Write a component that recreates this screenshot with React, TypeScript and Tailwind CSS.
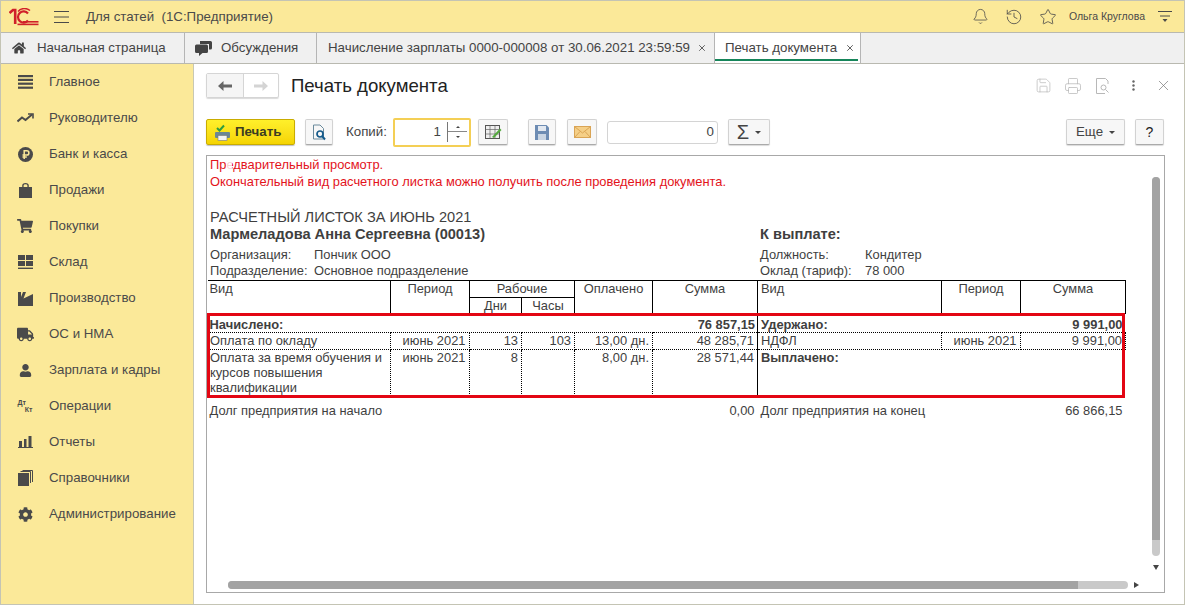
import { Bell, History, Star, X, Printer, Save } from "lucide-react";
import { FaCog, FaUser, FaTruck, FaShoppingCart, FaHome } from "react-icons/fa";

function Logo1C() {
  return (
    <svg width="30" height="18" viewBox="0 0 30 18" fill="none" stroke="#d0202a">
      <path d="M0.5 5 L4 2 H6.2 V16" strokeWidth="2.6" />
      <path d="M19 5.5 A5.6 5.6 0 1 0 19 12.5" strokeWidth="2.2" />
      <path d="M21 2.6 A8.4 8.4 0 0 0 9 3.5" strokeWidth="1.4" />
      <path d="M14 13.8 H29.5" strokeWidth="1.6" />
      <path d="M8.5 16.4 H29.5" strokeWidth="1.6" />
    </svg>
  );
}

function MenuLines() {
  return (
    <svg width="15" height="12" viewBox="0 0 15 12" stroke="#4a4a4a" strokeWidth="1">
      <path d="M0 .5H15M0 6H15M0 11.5H15" />
    </svg>
  );
}

function RubleIcon() {
  return (
    <svg width="15" height="15" viewBox="0 0 15 15">
      <circle cx="7.5" cy="7.5" r="7.5" fill="#4a4a4a" />
      <path d="M6.2 12V3.8H8.8A2.1 2.1 0 0 1 8.8 8H4.5M4.5 10H8.8" fill="none" stroke="#fbe999" strokeWidth="1.5" />
    </svg>
  );
}

function BagIcon() {
  return (
    <svg width="13" height="15" viewBox="0 0 13 15" fill="#4a4a4a">
      <path d="M0 4H3.2V2.5A3.3 2.5 0 0 1 9.8 2.5V4H13V15H0ZM4.6 4H8.4V2.6A1.9 1.4 0 0 0 4.6 2.6Z" fillRule="evenodd" />
    </svg>
  );
}

function BarsIcon() {
  return (
    <svg width="15" height="14" viewBox="0 0 15 14" fill="#4a4a4a">
      <rect x="0" y="0" width="15" height="2.2" />
      <rect x="0" y="3.8" width="15" height="2.2" />
      <rect x="0" y="7.6" width="15" height="2.2" />
      <rect x="0" y="11.6" width="15" height="2.2" />
    </svg>
  );
}

function TrendIcon() {
  return (
    <svg width="17" height="10" viewBox="0 0 17 10" fill="none" stroke="#4a4a4a" strokeWidth="2">
      <path d="M.5 8.5 5 4.5 8.5 7 15 1.5" />
      <path d="M11 1H16V5.5" strokeWidth="1.6" />
    </svg>
  );
}

function StoreIcon() {
  return (
    <svg width="15" height="14" viewBox="0 0 15 14" fill="#4a4a4a">
      <rect x="0" y="0" width="7" height="5" />
      <rect x="8" y="0" width="7" height="5" />
      <rect x="0" y="6" width="7" height="5" />
      <rect x="8" y="6" width="7" height="5" />
      <rect x="0" y="12.6" width="15" height="1.4" />
    </svg>
  );
}

function FactoryIcon() {
  return (
    <svg width="15" height="15" viewBox="0 0 15 15" fill="#4a4a4a">
      <path d="M0 15V1H3V6L5 1H8L5.5 7.5 15 3V15Z" />
    </svg>
  );
}

function ChartIcon() {
  return (
    <svg width="15" height="12" viewBox="0 0 15 12" fill="#4a4a4a">
      <rect x="1" y="5" width="3" height="6" />
      <rect x="6" y="3" width="2.5" height="8" />
      <rect x="10.5" y="0" width="3" height="11" />
      <rect x="0" y="11" width="15" height="1" />
    </svg>
  );
}

function BooksIcon() {
  return (
    <svg width="15" height="16" viewBox="0 0 15 16" fill="none" stroke="#4a4a4a">
      <rect x="0" y="3" width="11" height="13" fill="#4a4a4a" stroke="none" />
      <path d="M2.5 1.5H12.5V13M4.5 .5H14.5V12" />
    </svg>
  );
}

function DebitCredit() {
  return (
    <span className="flex h-[15px] w-[15px] flex-col text-[7px] leading-[7px] font-bold text-[#4a4a4a]">
      <span>Дт</span>
      <span className="self-end">Кт</span>
    </span>
  );
}

function CommentsIcon() {
  return (
    <svg width="17" height="15" viewBox="0 0 17 15" fill="#444">
      <path d="M5 0H15.5A1.5 1.5 0 0 1 17 1.5V7A1.5 1.5 0 0 1 15.5 8.5H14V3H5Z" />
      <path d="M1.5 3.5H11.5A1.5 1.5 0 0 1 13 5V10.5A1.5 1.5 0 0 1 11.5 12H7.5L4 15V12H1.5A1.5 1.5 0 0 1 0 10.5V5A1.5 1.5 0 0 1 1.5 3.5Z" />
    </svg>
  );
}

function PreviewGhost() {
  return (
    <svg width="15" height="16" viewBox="0 0 15 16" fill="none" stroke="#b8b8b8">
      <path d="M9 15.5H.5V.5H9.5L12 3V6" />
      <circle cx="7.5" cy="9.5" r="2.5" />
      <path d="M9.5 11.5 12.5 14.5" />
    </svg>
  );
}

const menu = [
  { label: "Главное", icon: <BarsIcon /> },
  { label: "Руководителю", icon: <TrendIcon /> },
  { label: "Банк и касса", icon: <RubleIcon /> },
  { label: "Продажи", icon: <BagIcon /> },
  { label: "Покупки", icon: <FaShoppingCart size={16} color="#4a4a4a" /> },
  { label: "Склад", icon: <StoreIcon /> },
  { label: "Производство", icon: <FactoryIcon /> },
  { label: "ОС и НМА", icon: <FaTruck size={17} color="#4a4a4a" /> },
  { label: "Зарплата и кадры", icon: <FaUser size={13} color="#4a4a4a" /> },
  { label: "Операции", icon: <DebitCredit /> },
  { label: "Отчеты", icon: <ChartIcon /> },
  { label: "Справочники", icon: <BooksIcon /> },
  { label: "Администрирование", icon: <FaCog size={15} color="#4a4a4a" /> },
];

function Sidebar() {
  return (
    <aside className="w-[193px] shrink-0 border-r border-[#c8c8b4] bg-[#fbe999]">
      {menu.map((item) => (
        <div key={item.label} className="flex h-9 items-center text-[13.3px] whitespace-nowrap text-[#4a4a4a]">
          <span className="flex w-[48px] shrink-0 justify-center">{item.icon}</span>
          <span>{item.label}</span>
        </div>
      ))}
    </aside>
  );
}

function Tabs() {
  return (
    <div className="flex h-[32px] shrink-0 border-y border-[#b9b9b0] bg-[#f0f0f0] text-[13.3px] text-[#444]">
      <div className="flex w-[184px] items-center border-r border-[#b5b5b5] pl-[11px]">
        <FaHome size={14} color="#444" />
        <span className="ml-[11px]">Начальная страница</span>
      </div>
      <div className="flex w-[132px] items-center border-r border-[#b5b5b5] pl-[10px]">
        <CommentsIcon />
        <span className="ml-[9px]">Обсуждения</span>
      </div>
      <div className="flex w-[398px] items-center border-r border-[#b5b5b5] pl-[11px]">
        <span className="whitespace-nowrap">Начисление зарплаты 0000-000008 от 30.06.2021 23:59:59</span>
        <X size={10} className="ml-[7px] shrink-0" />
      </div>
      <div className="relative flex w-[146px] items-center border-r border-[#b5b5b5] bg-white pl-[10px]">
        <span>Печать документа</span>
        <X size={10} className="ml-[8px]" />
        <span className="absolute right-[2px] bottom-[2px] left-0 h-[2px] bg-[#16855a]" />
      </div>
    </div>
  );
}

function Btn({ className = "", children }: { className?: string; children: React.ReactNode }) {
  return (
    <div
      className={`flex items-center justify-center rounded-[2px] border border-[#d2d2d2] border-b-[#aaa] bg-[#f7f7f7] shadow-[0_1px_1px_rgba(0,0,0,0.15)] ${className}`}
    >
      {children}
    </div>
  );
}

function Caret() {
  return <span className="ml-[6px] h-0 w-0 border-x-[3px] border-t-[3px] border-x-transparent border-t-[#444]" />;
}

function Header() {
  return (
    <div className="flex h-[43px] items-center">
      <div className="flex h-[25px] w-[73px] rounded-[2px] border border-[#d5d5d5] shadow-[0_1px_1px_rgba(0,0,0,0.15)]">
        <div className="flex w-[37px] items-center justify-center border-r border-[#d5d5d5] bg-[#f5f5f5]">
          <svg width="14" height="10" viewBox="0 0 14 10" fill="#666"><path d="M0 5 5.5 0V3.5H14V6.5H5.5V10Z" /></svg>
        </div>
        <div className="flex flex-1 items-center justify-center">
          <svg width="14" height="10" viewBox="0 0 14 10" fill="#d4d4d4"><path d="M14 5 8.5 0V3.5H0V6.5H8.5V10Z" /></svg>
        </div>
      </div>
      <h1 className="ml-[12px] text-[18.6px] text-[#222]">Печать документа</h1>
      <div className="-mr-[13px] ml-auto flex items-center text-[#b8b8b8]">
        <span className="flex w-[30px] justify-center"><Save size={17} strokeWidth={1} /></span>
        <span className="flex w-[30px] justify-center"><Printer size={18} strokeWidth={1} /></span>
        <span className="flex w-[30px] justify-center"><PreviewGhost /></span>
        <span className="flex w-[30px] justify-center">
          <svg width="3" height="11" viewBox="0 0 3 11" fill="#666"><circle cx="1.5" cy="1.5" r="1.2" /><circle cx="1.5" cy="5.5" r="1.2" /><circle cx="1.5" cy="9.5" r="1.2" /></svg>
        </span>
        <span className="flex w-[30px] justify-center"><X size={17} strokeWidth={1} color="#777" /></span>
      </div>
    </div>
  );
}

function Toolbar() {
  return (
    <div className="mt-[10px] flex h-[30px] items-center text-[13.3px] text-[#444]">
      <div className="flex h-[26px] w-[89px] items-center rounded-[2px] border border-[#c9ac00] bg-gradient-to-b from-[#fff02a] to-[#f5d400] pl-[7px] shadow-[0_1px_1px_rgba(0,0,0,0.25)]">
        <svg width="17" height="17" viewBox="0 0 17 17">
          <path d="M3 4 5.5 6.5 10 1.5" fill="none" stroke="#2e9d3e" strokeWidth="2" />
          <rect x="1" y="8" width="15" height="6" rx="1" fill="#6d8793" />
          <rect x="4" y="11.5" width="9" height="5" fill="#f4f4f4" stroke="#777" strokeWidth=".6" />
        </svg>
        <span className="ml-[4px] font-bold text-[#3c3c22]">Печать</span>
      </div>
      <Btn className="ml-[10px] h-[26px] w-[28px]">
        <svg width="15" height="17" viewBox="0 0 15 17" fill="none">
          <path d="M1.5 1H8L11.5 4.5V15H1.5Z" stroke="#6a8a9c" />
          <circle cx="8" cy="10" r="3" stroke="#155a8a" strokeWidth="1.7" />
          <path d="M10 12 13 15.5" stroke="#155a8a" strokeWidth="2" />
        </svg>
      </Btn>
      <span className="ml-[13px] w-[47px]">Копий:</span>
      <div className="flex h-[29px] w-[78px] items-center rounded-[2px] border-2 border-[#f4cf55] bg-white">
        <span className="w-[46px] text-right">1</span>
        <span className="ml-[6px] flex h-[20px] w-[20px] flex-col border-l border-[#777]">
          <span className="flex h-1/2 w-full items-center justify-center border-b border-[#888]">
            <span className="h-0 w-0 border-x-[2px] border-b-[2px] border-x-transparent border-b-[#444]" />
          </span>
          <span className="flex h-1/2 w-full items-center justify-center">
            <span className="h-0 w-0 border-x-[2px] border-t-[2px] border-x-transparent border-t-[#444]" />
          </span>
        </span>
      </div>
      <Btn className="ml-[7px] h-[26px] w-[30px]">
        <svg width="17" height="15" viewBox="0 0 17 15">
          <rect x=".5" y=".5" width="14" height="13" fill="#eee" stroke="#555" />
          <path d="M.5 4.5H14.5M.5 9H14.5M5 .5V13.5M10 .5V13.5" stroke="#666" strokeWidth=".7" />
          <path d="M7 12 15 3.5 16.5 5 9 13Z" fill="#54a93e" />
        </svg>
      </Btn>
      <Btn className="ml-[20px] h-[26px] w-[28px]">
        <svg width="14" height="15" viewBox="0 0 14 15">
          <path d="M0 0H11.5L14 2.5V15H0Z" fill="#6d8cb3" />
          <rect x="3" y="1" width="8" height="5" fill="#e2e8f0" />
          <rect x="3" y="9" width="8" height="6" fill="#c9d5e3" />
        </svg>
      </Btn>
      <Btn className="ml-[11px] h-[26px] w-[30px]">
        <svg width="17" height="12" viewBox="0 0 17 12">
          <rect x=".5" y=".5" width="16" height="11" fill="#f5cf87" stroke="#d9a455" />
          <path d="M.5 .5 8.5 7 16.5 .5M.5 11.5 6 5.5M16.5 11.5 11 5.5" fill="none" stroke="#d9a455" />
        </svg>
      </Btn>
      <div className="ml-[10px] flex h-[23px] w-[111px] items-center justify-end rounded-[3px] border border-[#d4d4d4] bg-white pr-[3px]">0</div>
      <Btn className="ml-[10px] h-[26px] w-[42px]">
        <span className="text-[20px] leading-none text-[#444]">Σ</span>
        <Caret />
      </Btn>
      <Btn className="ml-auto h-[26px] w-[59px]">
        <span>Еще</span>
        <Caret />
      </Btn>
      <Btn className="mr-[1px] ml-[10px] h-[26px] w-[29px]">
        <span className="text-[14px] text-[#222]">?</span>
      </Btn>
    </div>
  );
}

const th = "border border-black px-[3px] align-top font-normal";
const td = "border border-dotted border-black px-[3px] align-top";
const tdR = `${td} text-right`;
const tdC = "border border-dotted border-black pr-[2px] pl-[10px] text-center align-top";
const solidRight = "[border-right-style:solid]";

function PayTable() {
  return (
    <div className="relative w-[918px]">
      <table className="w-full table-fixed border-collapse text-[12.9px] leading-[15px]">
        <colgroup>
          <col className="w-[183px]" />
          <col className="w-[79px]" />
          <col className="w-[52px]" />
          <col className="w-[53px]" />
          <col className="w-[78px]" />
          <col className="w-[105px]" />
          <col className="w-[184px]" />
          <col className="w-[79px]" />
          <col className="w-[105px]" />
        </colgroup>
        <tbody>
          <tr className="h-[17px]">
            <th rowSpan={2} className={`${th} border-l-0 pl-[2px] text-left`}>Вид</th>
            <th rowSpan={2} className={th}>Период</th>
            <th colSpan={2} className={th}>Рабочие</th>
            <th rowSpan={2} className={th}>Оплачено</th>
            <th rowSpan={2} className={th}>Сумма</th>
            <th rowSpan={2} className={`${th} text-left`}>Вид</th>
            <th rowSpan={2} className={th}>Период</th>
            <th rowSpan={2} className={th}>Сумма</th>
          </tr>
          <tr className="h-[16px]">
            <th className={th}>Дни</th>
            <th className={th}>Часы</th>
          </tr>
          <tr className="h-[19px] font-bold">
            <td colSpan={5} className="border-b border-dotted border-black pt-[2px] pr-[3px] pl-[2px]">Начислено:</td>
            <td className={`border-r border-b border-dotted border-black px-[2px] pt-[2px] text-right ${solidRight}`}>76 857,15</td>
            <td colSpan={3} className="border-b border-dotted border-black px-[3px] pt-[2px]">
              <div className="flex justify-between"><span>Удержано:</span><span>9 991,00</span></div>
            </td>
          </tr>
          <tr className="h-[17px]">
            <td className={`${td} pl-[2px]`}>Оплата по окладу</td>
            <td className={tdC}>июнь 2021</td>
            <td className={tdR}>13</td>
            <td className={tdR}>103</td>
            <td className={tdR}>13,00 дн.</td>
            <td className={`${tdR} ${solidRight}`}>48 285,71</td>
            <td className={td}>НДФЛ</td>
            <td className={tdC}>июнь 2021</td>
            <td className={tdR}>9 991,00</td>
          </tr>
          <tr className="h-[48px]">
            <td className={`${td} pl-[2px]`}>Оплата за время обучения и курсов повышения квалификации</td>
            <td className={tdC}>июнь 2021</td>
            <td className={tdR}>8</td>
            <td className={td} />
            <td className={tdR}>8,00 дн.</td>
            <td className={`${tdR} ${solidRight}`}>28 571,44</td>
            <td colSpan={3} className="border-l border-solid border-black px-[3px] align-top font-bold">Выплачено:</td>
          </tr>
          <tr className="h-[27px]">
            <td colSpan={5} className="pt-[5px] pr-[3px] pl-[2px] align-top">Долг предприятия на начало</td>
            <td className="px-[3px] pt-[5px] text-right align-top">0,00</td>
            <td colSpan={2} className="px-[3px] pt-[5px] align-top">Долг предприятия на конец</td>
            <td className="px-[3px] pt-[5px] text-right align-top">66 866,15</td>
          </tr>
        </tbody>
      </table>
      <div className="pointer-events-none absolute top-[33px] left-0 h-[85px] w-full border-[3px] border-[#e30613]" />
    </div>
  );
}

function Sheet() {
  return (
    <div className="relative mt-[8px] h-[438px] overflow-hidden border border-[#a8a8a8] text-[12.9px] leading-[16px] text-[#3f3f3f]">
      <div className="pl-[3px] text-[#e3131b]">
        <p className="h-[17px] leading-[17px]">Предварительный просмотр.</p>
        <p className="h-[18px] leading-[18px]">Окончательный вид расчетного листка можно получить после проведения документа.</p>
      </div>
      <div className="grid grid-cols-[550px_1fr] pl-[3px]">
        <div className="pt-[17px]">
          <p className="text-[14.6px] leading-[18px]">РАСЧЕТНЫЙ ЛИСТОК ЗА ИЮНЬ 2021</p>
          <p className="text-[14.6px] leading-[17px] font-bold">Мармеладова Анна Сергеевна (00013)</p>
          <div className="mt-[4px] grid grid-cols-[104px_1fr]">
            <span>Организация:</span><span>Пончик ООО</span>
            <span>Подразделение:</span><span>Основное подразделение</span>
          </div>
        </div>
        <div className="pt-[35px]">
          <p className="text-[14.6px] leading-[17px] font-bold">К выплате:</p>
          <div className="mt-[4px] grid grid-cols-[105px_1fr]">
            <span>Должность:</span><span>Кондитер</span>
            <span>Оклад (тариф):</span><span>78 000</span>
          </div>
        </div>
      </div>
      <div className="mt-[1px]">
        <PayTable />
      </div>
      {/* полосы прокрутки поверх документа */}
      <div className="absolute top-[21px] right-[4px] flex h-[379px] w-[8px] flex-col overflow-hidden rounded-full bg-[#c9c9c9]">
        <div className="h-[363px] bg-[#a3a3a3]" />
      </div>
      <span className="absolute right-[5px] bottom-[22px] h-0 w-0 border-x-[3px] border-t-[5px] border-x-transparent border-t-[#444]" />
      <div className="absolute bottom-[3px] left-[21px] flex h-[8px] w-[900px] overflow-hidden rounded-full bg-[#c9c9c9]">
        <div className="w-[850px] bg-[#a3a3a3]" />
      </div>
      <span className="absolute right-[25px] bottom-[4px] h-0 w-0 border-y-[3px] border-l-[5px] border-y-transparent border-l-[#444]" />
      <div className="absolute top-0 left-[19px] h-[16px] w-[6px] bg-white/80" />
    </div>
  );
}

export default function App() {
  return (
    <div className="flex h-[605px] w-[1185px] flex-col overflow-hidden border border-[#c4c4b4] bg-white font-['Liberation_Sans',Arial,sans-serif]">
      <header className="flex h-[31px] shrink-0 items-center bg-[#fbe999] text-[#4a4a4a]">
        <div className="ml-[8px]"><Logo1C /></div>
        <div className="ml-[15px]"><MenuLines /></div>
        <span className="ml-[17px] text-[13.3px] whitespace-pre">Для статей  (1С:Предприятие)</span>
        <div className="ml-auto flex items-center">
          <Bell size={17} strokeWidth={1.1} />
          <History size={18} strokeWidth={1.1} className="ml-[16px]" />
          <Star size={18} strokeWidth={1.1} className="ml-[16px]" />
          <span className="ml-[12px] text-[10.5px]">Ольга Круглова</span>
          <svg width="14" height="11" viewBox="0 0 14 11" className="mr-[12px] ml-[13px]" stroke="#4a4a4a">
            <path d="M0 .5H14M2 5H12" />
            <path d="M4.5 8H9.5L7 11Z" fill="#4a4a4a" stroke="none" />
          </svg>
        </div>
      </header>
      <Tabs />
      <div className="flex min-h-0 flex-1">
        <Sidebar />
        <main className="min-w-0 flex-1 pr-[19px] pl-[12px]">
          <Header />
          <Toolbar />
          <Sheet />
        </main>
      </div>
    </div>
  );
}
